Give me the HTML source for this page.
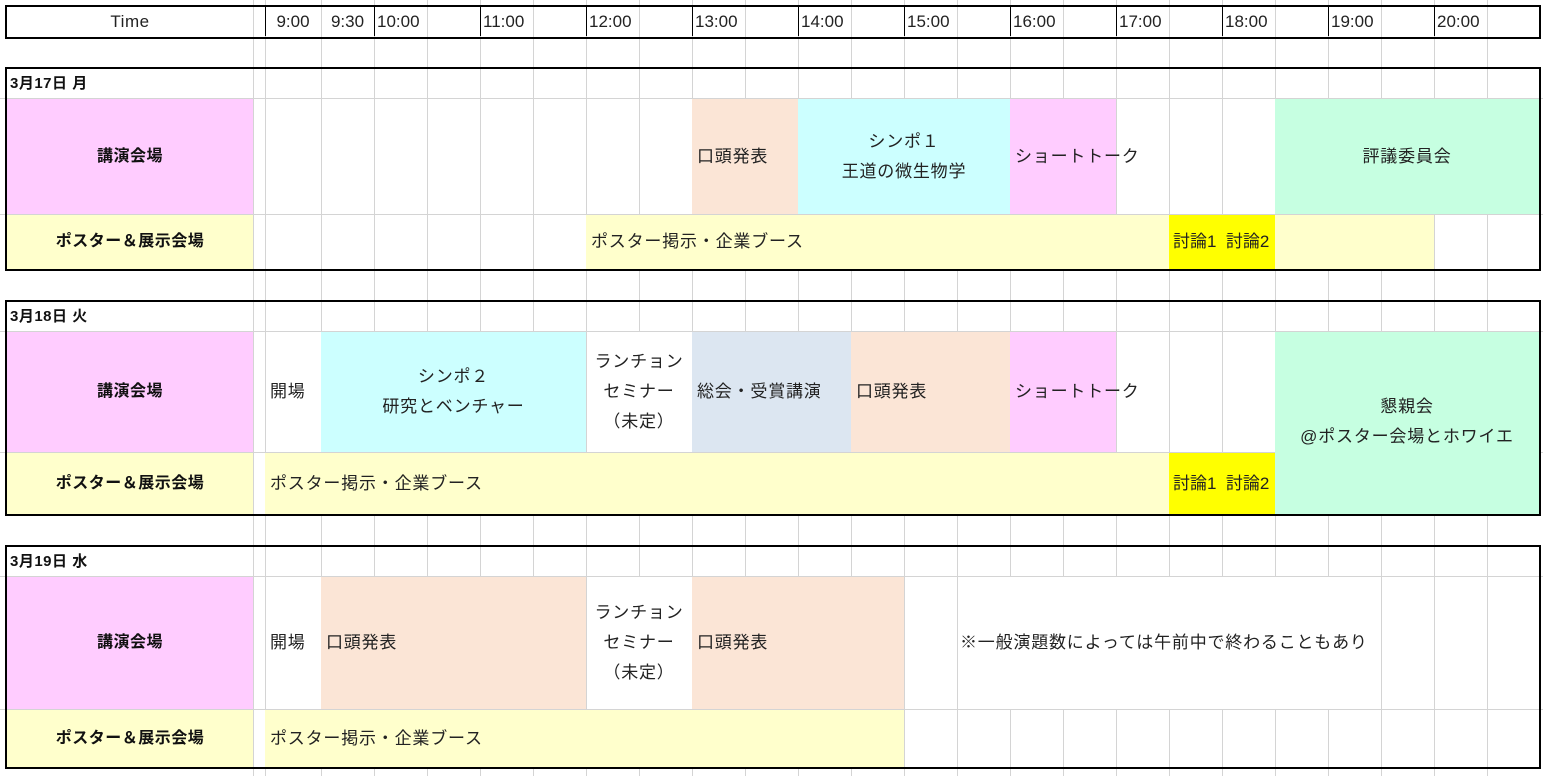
<!DOCTYPE html>
<html><head><meta charset="utf-8">
<style>
body{margin:0;width:1543px;height:776px;background:#fff;position:relative;overflow:hidden;font-family:"Liberation Sans","Noto Sans CJK JP",sans-serif;font-size:17px;color:#222;}
.b{position:absolute;}
.t{position:absolute;display:flex;align-items:center;white-space:nowrap;letter-spacing:0.8px;line-height:30px;}
.c{justify-content:center;text-align:center;}
.l{padding-left:5px;box-sizing:border-box;}
.bold{font-weight:bold;letter-spacing:0.5px;color:#111;font-size:16px;}
svg{position:absolute;left:0;top:0;}
</style></head><body>
<svg width="1543" height="776">
<g stroke="#d4d4d4" stroke-width="1">
<line x1="253.5" y1="0" x2="253.5" y2="776"/><line x1="265.5" y1="0" x2="265.5" y2="776"/><line x1="321.5" y1="0" x2="321.5" y2="776"/>
<line x1="374.5" y1="0" x2="374.5" y2="776"/><line x1="427.5" y1="0" x2="427.5" y2="776"/><line x1="480.5" y1="0" x2="480.5" y2="776"/><line x1="533.5" y1="0" x2="533.5" y2="776"/><line x1="586.5" y1="0" x2="586.5" y2="776"/><line x1="639.5" y1="0" x2="639.5" y2="776"/><line x1="692.5" y1="0" x2="692.5" y2="776"/><line x1="745.5" y1="0" x2="745.5" y2="776"/><line x1="798.5" y1="0" x2="798.5" y2="776"/><line x1="851.5" y1="0" x2="851.5" y2="776"/><line x1="904.5" y1="0" x2="904.5" y2="776"/><line x1="957.5" y1="0" x2="957.5" y2="776"/><line x1="1010.5" y1="0" x2="1010.5" y2="776"/><line x1="1063.5" y1="0" x2="1063.5" y2="776"/><line x1="1116.5" y1="0" x2="1116.5" y2="776"/><line x1="1169.5" y1="0" x2="1169.5" y2="776"/><line x1="1222.5" y1="0" x2="1222.5" y2="776"/><line x1="1275.5" y1="0" x2="1275.5" y2="776"/><line x1="1328.5" y1="0" x2="1328.5" y2="776"/><line x1="1381.5" y1="0" x2="1381.5" y2="776"/><line x1="1434.5" y1="0" x2="1434.5" y2="776"/><line x1="1487.5" y1="0" x2="1487.5" y2="776"/>
<line x1="0" y1="98.5" x2="1543" y2="98.5"/><line x1="0" y1="214.5" x2="1543" y2="214.5"/><line x1="0" y1="331.5" x2="1543" y2="331.5"/><line x1="0" y1="452.5" x2="1543" y2="452.5"/><line x1="0" y1="576.5" x2="1543" y2="576.5"/><line x1="0" y1="709.5" x2="1543" y2="709.5"/>
</g>
</svg>
<div class="b" style="left:7px;top:99px;width:246px;height:115px;background:#ffccff"></div>
<div class="b" style="left:7px;top:215px;width:246px;height:54px;background:#ffffcc"></div>
<div class="b" style="left:692px;top:99px;width:106px;height:115px;background:#fbe5d6"></div>
<div class="b" style="left:798px;top:99px;width:212px;height:115px;background:#ccffff"></div>
<div class="b" style="left:1010px;top:99px;width:106px;height:115px;background:#ffccff"></div>
<div class="b" style="left:1275px;top:99px;width:264px;height:115px;background:#c6ffe1"></div>
<div class="b" style="left:586px;top:215px;width:583px;height:54px;background:#ffffcc"></div>
<div class="b" style="left:1169px;top:215px;width:106px;height:54px;background:#ffff00"></div>
<div class="b" style="left:1275px;top:215px;width:159px;height:54px;background:#ffffcc"></div>

<div class="b" style="left:7px;top:332px;width:246px;height:120px;background:#ffccff"></div>
<div class="b" style="left:7px;top:453px;width:246px;height:61px;background:#ffffcc"></div>
<div class="b" style="left:266px;top:332px;width:55px;height:120px;background:#fff"></div>
<div class="b" style="left:321px;top:332px;width:265px;height:120px;background:#ccffff"></div>
<div class="b" style="left:587px;top:332px;width:105px;height:120px;background:#fff"></div>
<div class="b" style="left:692px;top:332px;width:159px;height:120px;background:#dce6f1"></div>
<div class="b" style="left:851px;top:332px;width:159px;height:120px;background:#fbe5d6"></div>
<div class="b" style="left:1010px;top:332px;width:106px;height:120px;background:#ffccff"></div>
<div class="b" style="left:1275px;top:332px;width:264px;height:182px;background:#c6ffe1"></div>
<div class="b" style="left:265px;top:453px;width:904px;height:61px;background:#ffffcc"></div>
<div class="b" style="left:1169px;top:453px;width:106px;height:61px;background:#ffff00"></div>

<div class="b" style="left:7px;top:577px;width:246px;height:132px;background:#ffccff"></div>
<div class="b" style="left:7px;top:710px;width:246px;height:57px;background:#ffffcc"></div>
<div class="b" style="left:266px;top:577px;width:55px;height:132px;background:#fff"></div>
<div class="b" style="left:321px;top:577px;width:265px;height:132px;background:#fbe5d6"></div>
<div class="b" style="left:587px;top:577px;width:105px;height:132px;background:#fff"></div>
<div class="b" style="left:692px;top:577px;width:212px;height:132px;background:#fbe5d6"></div>
<div class="b" style="left:958px;top:577px;width:423px;height:132px;background:#fff"></div>
<div class="b" style="left:265px;top:710px;width:639px;height:57px;background:#ffffcc"></div>

<div class="b" style="left:5px;top:5px;width:1532px;height:30px;border:2px solid #000"></div>
<div class="b" style="left:265px;top:7px;width:1px;height:29px;background:#000"></div>
<div class="b" style="left:374px;top:7px;width:1px;height:29px;background:#000"></div>
<div class="b" style="left:480px;top:7px;width:1px;height:29px;background:#000"></div>
<div class="b" style="left:586px;top:7px;width:1px;height:29px;background:#000"></div>
<div class="b" style="left:692px;top:7px;width:1px;height:29px;background:#000"></div>
<div class="b" style="left:798px;top:7px;width:1px;height:29px;background:#000"></div>
<div class="b" style="left:904px;top:7px;width:1px;height:29px;background:#000"></div>
<div class="b" style="left:1010px;top:7px;width:1px;height:29px;background:#000"></div>
<div class="b" style="left:1116px;top:7px;width:1px;height:29px;background:#000"></div>
<div class="b" style="left:1222px;top:7px;width:1px;height:29px;background:#000"></div>
<div class="b" style="left:1328px;top:7px;width:1px;height:29px;background:#000"></div>
<div class="b" style="left:1434px;top:7px;width:1px;height:29px;background:#000"></div>
<div class="b" style="left:5px;top:67px;width:1532px;height:200px;border:2px solid #000"></div>
<div class="b" style="left:5px;top:300px;width:1532px;height:212px;border:2px solid #000"></div>
<div class="b" style="left:5px;top:545px;width:1532px;height:220px;border:2px solid #000"></div>

<div class="t c" style="left:7px;top:7px;width:246px;height:29px;letter-spacing:0.5px">Time</div>
<div class="t c" style="left:265px;top:7px;width:56px;height:29px;letter-spacing:0">9:00</div>
<div class="t c" style="left:321px;top:7px;width:53px;height:29px;letter-spacing:0">9:30</div>
<div class="t" style="left:377px;top:7px;height:29px;letter-spacing:0">10:00</div>
<div class="t" style="left:483px;top:7px;height:29px;letter-spacing:0">11:00</div>
<div class="t" style="left:589px;top:7px;height:29px;letter-spacing:0">12:00</div>
<div class="t" style="left:695px;top:7px;height:29px;letter-spacing:0">13:00</div>
<div class="t" style="left:801px;top:7px;height:29px;letter-spacing:0">14:00</div>
<div class="t" style="left:907px;top:7px;height:29px;letter-spacing:0">15:00</div>
<div class="t" style="left:1013px;top:7px;height:29px;letter-spacing:0">16:00</div>
<div class="t" style="left:1119px;top:7px;height:29px;letter-spacing:0">17:00</div>
<div class="t" style="left:1225px;top:7px;height:29px;letter-spacing:0">18:00</div>
<div class="t" style="left:1331px;top:7px;height:29px;letter-spacing:0">19:00</div>
<div class="t" style="left:1437px;top:7px;height:29px;letter-spacing:0">20:00</div>

<div class="t bold" style="left:10px;top:69px;height:29px;font-size:15px">3月17日 月</div>
<div class="t c bold" style="left:7px;top:99px;width:246px;height:115px">講演会場</div>
<div class="t c bold" style="left:7px;top:215px;width:246px;height:54px">ポスター＆展示会場</div>
<div class="t l" style="left:692px;top:99px;height:115px">口頭発表</div>
<div class="t c" style="left:798px;top:99px;width:212px;height:115px">シンポ１<br>王道の微生物学</div>
<div class="t l" style="left:1010px;top:99px;height:115px">ショートトーク</div>
<div class="t c" style="left:1275px;top:99px;width:264px;height:115px">評議委員会</div>
<div class="t l" style="left:586px;top:215px;height:54px">ポスター掲示・企業ブース</div>
<div class="t" style="left:1173px;top:215px;height:54px;letter-spacing:0">討論1&nbsp;&nbsp;討論2</div>

<div class="t bold" style="left:10px;top:302px;height:29px;font-size:15px">3月18日 火</div>
<div class="t c bold" style="left:7px;top:332px;width:246px;height:120px">講演会場</div>
<div class="t c bold" style="left:7px;top:453px;width:246px;height:61px">ポスター＆展示会場</div>
<div class="t l" style="left:265px;top:332px;height:120px">開場</div>
<div class="t c" style="left:321px;top:332px;width:265px;height:120px">シンポ２<br>研究とベンチャー</div>
<div class="t c" style="left:586px;top:332px;width:106px;height:120px">ランチョン<br>セミナー<br>（未定）</div>
<div class="t l" style="left:692px;top:332px;height:120px">総会・受賞講演</div>
<div class="t l" style="left:851px;top:332px;height:120px">口頭発表</div>
<div class="t l" style="left:1010px;top:332px;height:120px">ショートトーク</div>
<div class="t c" style="left:1275px;top:362px;width:264px;height:120px">懇親会<br>@ポスター会場とホワイエ</div>
<div class="t l" style="left:265px;top:453px;height:61px">ポスター掲示・企業ブース</div>
<div class="t" style="left:1173px;top:453px;height:61px;letter-spacing:0">討論1&nbsp;&nbsp;討論2</div>

<div class="t bold" style="left:10px;top:547px;height:29px;font-size:15px">3月19日 水</div>
<div class="t c bold" style="left:7px;top:577px;width:246px;height:132px">講演会場</div>
<div class="t c bold" style="left:7px;top:710px;width:246px;height:57px">ポスター＆展示会場</div>
<div class="t l" style="left:265px;top:577px;height:132px">開場</div>
<div class="t l" style="left:321px;top:577px;height:132px">口頭発表</div>
<div class="t c" style="left:586px;top:577px;width:106px;height:132px">ランチョン<br>セミナー<br>（未定）</div>
<div class="t l" style="left:692px;top:577px;height:132px">口頭発表</div>
<div class="t" style="left:960px;top:577px;height:132px">※一般演題数によっては午前中で終わることもあり</div>
<div class="t l" style="left:265px;top:710px;height:57px">ポスター掲示・企業ブース</div>
</body></html>
